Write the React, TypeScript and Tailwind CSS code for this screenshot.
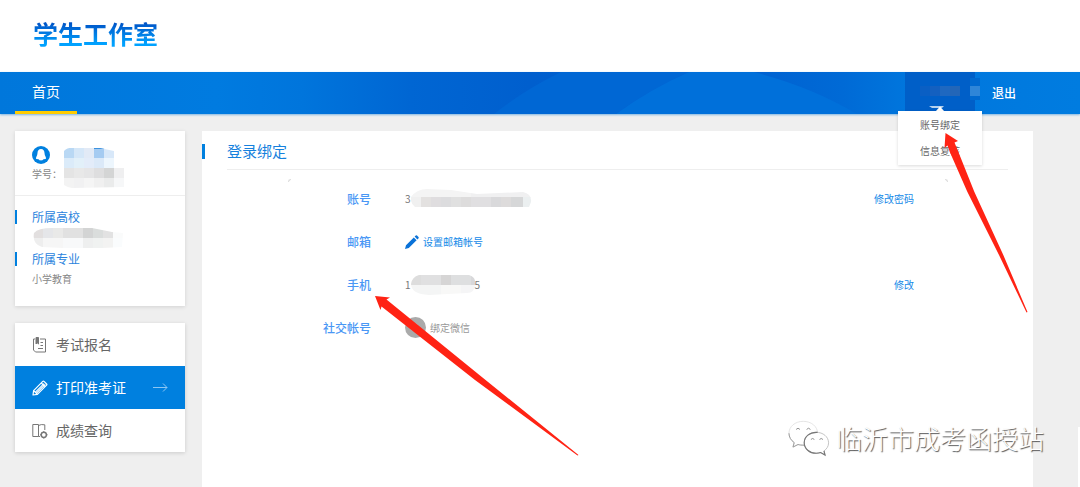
import type { ReactNode } from 'react';

interface Cell {
  x: number;
  y: number;
  w?: number;
  h?: number;
  fill: string;
}

const nameCells: Cell[] = [
  { x: 4, y: 2, fill: '#b9d8f4' },
  { x: 14, y: 2, fill: '#d5e7f8' },
  { x: 24, y: 2, fill: '#e2eaf6' },
  { x: 34, y: 2, fill: '#a5cbf1' },
  { x: 44, y: 2, w: 12, fill: '#d8e8f9' },
  { x: 34, y: 2, w: 14, h: 1, fill: '#3d92de' },
  { x: 4, y: 12, fill: '#dbebf9' },
  { x: 14, y: 12, fill: '#e2f0f9' },
  { x: 24, y: 12, fill: '#e3ecf9' },
  { x: 34, y: 12, fill: '#dbe9f8' },
  { x: 44, y: 12, w: 12, fill: '#edf6fd' },
  { x: 4, y: 22, fill: '#e4e4e4' },
  { x: 14, y: 22, fill: '#e8e8e8' },
  { x: 24, y: 22, fill: '#e5e5e6' },
  { x: 34, y: 22, fill: '#dededf' },
  { x: 44, y: 22, fill: '#d4d5d5' },
  { x: 54, y: 22, fill: '#efeff0' },
  { x: 4, y: 32, fill: '#f3f3f3' },
  { x: 14, y: 32, fill: '#f1f1f2' },
  { x: 24, y: 32, fill: '#f5f5f5' },
  { x: 34, y: 32, fill: '#f0f0f0' },
  { x: 44, y: 32, fill: '#eaebeb' },
  { x: 54, y: 32, fill: '#f6f7f8' },
];

const schoolCells: Cell[] = [
  { x: 1, y: 1, fill: '#e2dfdf' },
  { x: 11, y: 1, fill: '#e5e6e9' },
  { x: 21, y: 1, fill: '#e9e9e8' },
  { x: 31, y: 1, w: 20, fill: '#e1e1e1' },
  { x: 51, y: 1, fill: '#d3d4d4' },
  { x: 61, y: 1, fill: '#dadddc' },
  { x: 71, y: 1, fill: '#e2e2e2' },
  { x: 81, y: 1, fill: '#fafbfb' },
  { x: 1, y: 11, fill: '#eeeeee' },
  { x: 11, y: 11, w: 20, fill: '#f6f6f6' },
  { x: 31, y: 11, w: 20, fill: '#f8f9fa' },
  { x: 51, y: 11, fill: '#eeefef' },
  { x: 61, y: 11, fill: '#f0f2f1' },
  { x: 71, y: 11, fill: '#f3f3f2' },
  { x: 81, y: 11, fill: '#fafcfd' },
];

const accountCells: Cell[] = [
  { x: 0, y: 0, w: 60, h: 9, fill: '#f4f4f4' },
  { x: 60, y: 0, w: 60, h: 9, fill: '#f0f0f1' },
  { x: 0, y: 8, fill: '#f0f0f0' },
  { x: 10, y: 8, fill: '#e3e1e0' },
  { x: 20, y: 8, fill: '#dfdddf' },
  { x: 30, y: 8, fill: '#dcdcde' },
  { x: 40, y: 8, fill: '#e0e0e0' },
  { x: 50, y: 8, fill: '#dddcdc' },
  { x: 60, y: 8, w: 20, fill: '#e0dfe1' },
  { x: 80, y: 8, fill: '#d9d9db' },
  { x: 90, y: 8, fill: '#dddbdb' },
  { x: 100, y: 8, w: 12, fill: '#d6d7d8' },
  { x: 112, y: 8, fill: '#ebeff0' },
];

const phoneCells: Cell[] = [
  { x: 0, y: 0, fill: '#dddddd' },
  { x: 10, y: 0, w: 20, fill: '#e0e0e1' },
  { x: 30, y: 0, fill: '#d6d5d5' },
  { x: 40, y: 0, w: 20, fill: '#dedfe0' },
  { x: 60, y: 0, fill: '#d8d8da' },
  { x: 0, y: 10, w: 30, fill: '#f4f5f5' },
  { x: 30, y: 10, w: 20, fill: '#f8f8f7' },
  { x: 50, y: 10, w: 20, fill: '#f5f5f6' },
];

function Mosaic({ id, w, h, clip, cells, className = '' }: { id: string; w: number; h: number; clip: string; cells: Cell[]; className?: string }) {
  return (
    <svg width={w} height={h} viewBox={`0 0 ${w} ${h}`} className={`shrink-0 ${className}`} aria-hidden="true">
      <clipPath id={id}>
        <path d={clip} />
      </clipPath>
      <g clipPath={`url(#${id})`} shapeRendering="crispEdges">
        {cells.map((c, i) => (
          <rect key={i} x={c.x} y={c.y} width={c.w ?? 10} height={c.h ?? 10} fill={c.fill} />
        ))}
      </g>
    </svg>
  );
}

function NavBackdrop() {
  return (
    <svg className="absolute inset-0 h-full w-full" viewBox="0 0 1080 42" preserveAspectRatio="none" aria-hidden="true">
      <defs>
        <linearGradient id="nav-base">
          <stop offset="0" stopColor="#0077db" />
          <stop offset="0.2" stopColor="#007be0" />
          <stop offset="0.28" stopColor="#0075dc" />
          <stop offset="0.38" stopColor="#0066d3" />
          <stop offset="0.49" stopColor="#005fce" />
          <stop offset="0.7" stopColor="#0062d1" />
          <stop offset="0.78" stopColor="#006ad6" />
          <stop offset="0.84" stopColor="#0076dd" />
          <stop offset="1" stopColor="#007ce0" />
        </linearGradient>
      </defs>
      <rect width="1080" height="42" fill="url(#nav-base)" />
      <path d="M494 42 Q524 18 561 0 H689 Q650 17 616 42Z" fill="#0067d4" />
      <path d="M616 42 Q650 17 689 0 H754 Q812 15 857 42Z" fill="#0070da" />
    </svg>
  );
}

function AvatarIcon() {
  return (
    <svg width="18" height="18" viewBox="0 0 18 18" aria-hidden="true">
      <circle cx="9" cy="9" r="9" fill="#0080df" />
      <path d="M9 3 C6.7 3 5.5 4.7 5.5 7 C5.5 8.4 5 9.6 4.4 10.8 C3.9 12 3.8 12.9 4.5 13 L6.5 13.3 C7.2 14.3 8 14.4 9 14.4 C10 14.4 10.8 14.3 11.5 13.3 L13.5 13 C14.2 12.9 14.1 12 13.6 10.8 C13 9.6 12.5 8.4 12.5 7 C12.5 4.7 11.3 3 9 3Z" fill="#fff" />
    </svg>
  );
}

function SignUpIcon() {
  return (
    <svg width="16" height="16" viewBox="0 0 16 16" fill="none" stroke="#777" aria-hidden="true">
      <path d="M3 2 H1.5 V13 L3.5 15 H13.5 V2 H8" />
      <path d="M4 .5 H6.5 V7 L5.2 5.8 L4 7Z" fill="#777" />
      <path d="M8.5 5.5 H11 M8.5 8.5 H11 M6 11.5 H11" />
    </svg>
  );
}

function PencilIcon() {
  return (
    <svg width="16" height="16" viewBox="0 0 16 16" fill="none" stroke="#fff" strokeWidth="1.2" strokeLinejoin="round" aria-hidden="true">
      <path d="M1 15 L1.6 10.6 L10.8 1.4 Q11.4 .8 12 1.4 L14.6 4 Q15.2 4.6 14.6 5.2 L5.4 14.4Z" />
      <path d="M1.6 10.6 L5.4 14.4 M3.4 12.2 L12 3.6 M4.6 13 L13.3 4.4 M9.3 3 L13 6.7" />
    </svg>
  );
}

function ScoreIcon() {
  return (
    <svg width="16" height="16" viewBox="0 0 16 16" fill="none" stroke="#777" aria-hidden="true">
      <path d="M.8 1.5 H6.5 V13.5 H.8Z M6.5 2.5 Q9 1 12.8 1.8 V7" />
      <path d="M6.5 13.5 H8" />
      <circle cx="11.8" cy="11.8" r="2.6" strokeWidth="1.5" />
      <path d="M11.8 8 V9 M11.8 14.6 V15.6 M8 11.8 H9 M14.6 11.8 H15.6" />
    </svg>
  );
}

function ArrowRight() {
  return (
    <svg width="15" height="9" viewBox="0 0 15 9" fill="none" stroke="#8cc6f3" className="ml-auto" aria-hidden="true">
      <path d="M0 4.5 H14 M10 .5 L14 4.5 L10 8.5" />
    </svg>
  );
}

function EditIcon() {
  return (
    <svg width="14" height="14" viewBox="0 0 14 14" fill="#0a72d8" aria-hidden="true">
      <path d="M0 14 L1 10.2 L8.8 2.4 L11.6 5.2 L3.8 13Z M9.6 1.6 L10.8 .4 Q11.4 0 12 .5 L13.5 2 Q14 2.6 13.6 3.2 L12.4 4.4Z" />
    </svg>
  );
}

function WeChatIcon() {
  return (
    <svg width="42" height="37" viewBox="0 0 44 38" aria-hidden="true">
      <path d="M16 1 C7.500 1 1 6.500 1 13.500 C1 17.500 3.200 21 6.500 23.300 L5.200 28 L10.500 25.300 C12.200 25.800 14 26 16 26 C24.500 26 31 20.500 31 13.500 C31 6.500 24.500 1 16 1Z" fill="#fff" stroke="#ddd" strokeWidth=".8" />
      <path d="M1 13.500 C1 17.500 3.200 21 6.500 23.300 L5.200 28 L10.500 25.300 C12.200 25.800 14 26 17 26" fill="none" stroke="#999" />
      <path d="M29.500 12.500 C22.500 12.500 17 17.300 17 23.500 C17 29.700 22.500 34.500 29.500 34.500 C31.200 34.500 32.800 34.200 34.200 33.700 L38.800 36.300 L37.700 32 C40.700 30 42.500 27 42.500 23.500 C42.500 17.300 36.800 12.500 29.500 12.500Z" fill="#fff" stroke="#bbb" strokeWidth=".9" />
      <path d="M31 12.600 C22.500 12 17 17.300 17 23.500 C17 29.700 22.500 34.500 29.500 34.500 C31.200 34.500 32.800 34.200 34.200 33.700 L38.800 36.300 L37.700 32" fill="none" stroke="#777" strokeWidth="1.2" />
      <path d="M8.500 9.500 Q10.500 7 12.500 9.500 M19.500 9.500 Q21.500 7 23.500 9.500 M24 20 Q25.800 18 27.600 20 M33 20 Q34.800 18 36.600 20" fill="none" stroke="#888" />
    </svg>
  );
}

const menu = [
  { label: '考试报名', icon: <SignUpIcon />, active: false },
  { label: '打印准考证', icon: <PencilIcon />, active: true },
  { label: '成绩查询', icon: <ScoreIcon />, active: false },
];

function SideHeading({ children }: { children: ReactNode }) {
  return (
    <h3 className="flex items-center gap-[15px] text-[12px] leading-5 text-[#2a83dd]">
      <span className="h-[14px] w-0.5 bg-[#0080df]" />
      {children}
    </h3>
  );
}

function Row({ label, children, action }: { label: string; children: ReactNode; action?: string }) {
  return (
    <div className="flex h-[43px] items-center">
      <dt className="mr-[34px] w-36 text-right text-[12px] font-medium text-[#4a97f5]">{label}</dt>
      <dd className="flex flex-1 items-center text-[10px] text-[#777]">
        {children}
        {action && (
          <a href="#" className="ml-auto text-[#1489e8]">
            {action}
          </a>
        )}
      </dd>
    </div>
  );
}

export default function App() {
  return (
    <div className="relative flex min-h-screen flex-col bg-[#efefef] font-['Noto_Sans_CJK_SC',sans-serif]">
      <header className="flex h-[72px] items-center bg-white px-[33px] pb-1.5">
        <h1 className="bg-linear-to-b from-[#0050c4] from-20% to-[#00a2ff] to-80% bg-clip-text text-[25px] leading-9 font-bold text-transparent">
          学生工作室
        </h1>
      </header>

      <nav className="relative flex h-[42px] justify-between pr-16 pl-[15px] shadow-[0_1px_2px_#7fb5e0]">
        <NavBackdrop />
        <a href="#" className="relative flex items-center border-b-3 border-[#ffcc00] px-[17px] text-[14px] text-white">
          首页
        </a>
        <div className="relative flex gap-[17px]">
          <div className="relative w-[70px]">
            <button type="button" aria-label="账号" className="flex h-full w-full items-start bg-[#005fc8] pt-1.5">
              <svg width="76" height="36" viewBox="0 0 76 36" className="shrink-0 overflow-visible" aria-hidden="true">
                <rect x="65" width="10" height="22" fill="#0069cf" />
                <rect x="15" y="8" width="10" height="10" fill="#0a5fc4" />
                <rect x="25" y="8" width="10" height="10" fill="#1460c0" />
                <rect x="35" y="8" width="10" height="10" fill="#1f68c0" />
                <rect x="45" y="8" width="10" height="10" fill="#2366b8" />
                <rect x="65" y="8" width="10" height="10" fill="#2f86d8" />
                <path d="M24 28 H39 L37 30 H27Z" fill="#b5d1ee" />
                <path d="M31 33 L35 28.500 L39 33Z" fill="#fff" />
              </svg>
            </button>
            <ul className="absolute top-[39px] -left-[7px] z-10 w-[84px] bg-white py-px text-center text-[10px] text-[#666] shadow-[0_1px_3px_rgba(0,0,0,0.15)]">
              <li>
                <a href="#" className="block leading-[26px]">账号绑定</a>
              </li>
              <li>
                <a href="#" className="block leading-[26px]">信息复核</a>
              </li>
            </ul>
          </div>
          <a href="#" className="flex items-center text-[12px] font-medium text-white">
            退出
          </a>
        </div>
      </nav>

      <div className="flex flex-1 gap-[17px] pt-[17px] pr-[47px] pl-[15px]">
        <aside className="w-[170px] shrink-0">
          <section className="mb-[17px] bg-white pb-[17px] text-[10px] text-[#888] shadow-[0_1px_4px_rgba(0,0,0,0.12)]">
            <div className="flex h-[65px] items-start border-b border-[#eee] px-[17px] pt-[15px]">
              <div className="w-7">
                <AvatarIcon />
                <p className="leading-5 whitespace-nowrap">学号：</p>
              </div>
              <Mosaic
                id="name"
                w={86}
                h={44}
                clip="M4 5 Q8 1 14 2 L40 2 L54 5 V22 L64 22 V41 L12 42 Q1 40 0 32 Q0 26 4 22Z"
                cells={nameCells}
              />
            </div>
            <div className="pt-[11px]">
              <SideHeading>所属高校</SideHeading>
              <div className="h-[22px] px-[17px]">
                <Mosaic
                  id="school"
                  w={92}
                  h={22}
                  clip="M2 6 Q6 1 20 1 L60 1 L80 5 L91 6 L90 20 L52 22 L10 20 Q0 17 2 6Z"
                  cells={schoolCells}
                />
              </div>
              <SideHeading>所属专业</SideHeading>
              <p className="px-[17px] leading-5">小学教育</p>
            </div>
          </section>

          <ul className="bg-white shadow-[0_1px_4px_rgba(0,0,0,0.15)]">
            {menu.map(m => (
              <li key={m.label}>
                <a
                  href="#"
                  className={`flex h-[43px] items-center gap-2 px-[17px] text-[14px] ${m.active ? 'bg-[#0080df] text-white' : 'text-[#666]'}`}
                >
                  {m.icon}
                  {m.label}
                  {m.active && <ArrowRight />}
                </a>
              </li>
            ))}
          </ul>
        </aside>

        <main className="relative flex-1 bg-white pr-[25px]">
          <div className="flex items-center gap-[22px] pt-0.5">
            <span className="h-[15px] w-[3px] bg-[#0080df]" />
            <h2 className="flex-1 border-b border-[#eee] text-[15px] leading-9 text-[#1681dd]">登录绑定</h2>
          </div>

          <dl className="relative mt-[7px] pr-[94px] pl-[25px]">
            <span className="absolute top-0.5 left-[86px] h-[3px] w-[3px] rounded-tl-sm border-t border-l border-[#ddd]" />
            <span className="absolute top-0.5 right-[60px] h-[3px] w-[3px] rounded-tr-sm border-t border-r border-[#ddd]" />
            <Row label="账号" action="修改密码">
              3
              <Mosaic
                id="account"
                w={121}
                h={20}
                clip="M0 8 Q6 0 16 0 L40 1 L66 5 L112 3 Q121 5 120 13 L118 18 H4 Q-1 14 0 8Z"
                cells={accountCells}
              />
            </Row>
            <Row label="邮箱">
              <a href="#" className="flex items-center gap-1 text-[#1489e8]">
                <EditIcon />
                设置邮箱帐号
              </a>
            </Row>
            <Row label="手机" action="修改">
              1
              <Mosaic
                id="phone"
                w={64}
                h={20}
                clip="M8 0 H58 Q65 2 64 9 Q64 18 56 18 L18 20 Q0 19 0 9 Q1 2 8 0Z"
                cells={phoneCells}
              />
              5
            </Row>
            <Row label="社交帐号">
              <a href="#" className="flex items-center gap-1 text-[#999]">
                <svg width="21" height="21" viewBox="0 0 21 21" aria-hidden="true">
                  <circle cx="10.500" cy="10.500" r="10.500" fill="#aaa" />
                  <circle cx="9" cy="10" r="4" fill="#bbb" />
                </svg>
                绑定微信
              </a>
            </Row>
          </dl>

          {/* pointers to the phone row and the account menu */}
          <svg width="204" height="160" viewBox="0 0 204 160" className="pointer-events-none absolute top-[165px] left-[173px] z-20" aria-hidden="true">
            <path d="M0 0 L15 1.500 L11.500 3.500 L105 79.500 L203.500 159 L202.500 159.500 L100 84 L6.500 10.500 L5.500 14Z" fill="#ff2314" />
          </svg>
          <svg width="84" height="181" viewBox="0 0 84 181" className="pointer-events-none absolute top-0.5 right-[5px] z-20 overflow-visible" aria-hidden="true">
            <path d="M1.500 0 L14 8 L10.500 9.500 L14.300 18.700 L30.300 58.700 L59.300 122 L83.500 179 L82.500 179.500 L55 122 L23.300 58.700 L5.700 18.700 L3.500 12.500 L.5 15Z" fill="#ff2314" />
          </svg>
        </main>
      </div>

      <span className="absolute right-0 bottom-0 h-15 w-0.5 bg-white" />
      <div className="absolute right-9 bottom-[29px] flex items-center gap-1.5">
        <WeChatIcon />
        <span className="text-[26px] leading-10 font-light text-white [text-shadow:1px_1px_1px_#555]">临沂市成考函授站</span>
      </div>
    </div>
  );
}
